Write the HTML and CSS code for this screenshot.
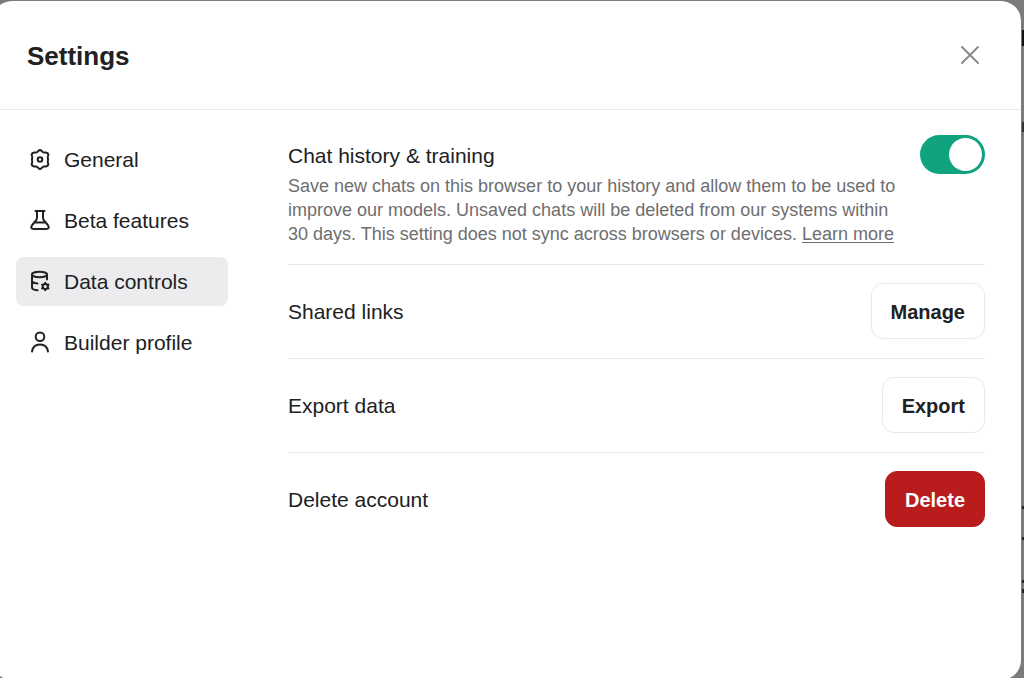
FILE: index.html
```
<!DOCTYPE html>
<html lang="en">
<head>
    <meta charset="UTF-8">
    <meta name="viewport" content="width=device-width, initial-scale=1.0">
    <title>Settings</title>
    <link rel="stylesheet" href="styles.css">
</head>
<body>
    <div class="modal" role="dialog" aria-labelledby="modal-title">
        <header class="modal-header">
            <h2 id="modal-title">Settings</h2>
            <button class="close-btn" aria-label="Close">
                <svg width="20" height="20" viewBox="0 0 20 20"><path d="M2 2L18 18M18 2L2 18"/></svg>
            </button>
        </header>

        <div class="modal-body">
            <nav class="tabs">
                <button class="tab">
                    <svg width="24" height="24" viewBox="0 0 24 24">
                        <path d="M10.4 2.8Q12 1.4 13.6 2.8L14.6 3.9Q15.2 4.5 16.2 4.5H17.8Q20.4 4.8 20.3 7.2L19.8 8.8Q19.5 9.6 19.9 10.4Q20.2 11.5 19.9 12.6Q19.5 13.4 19.8 14.2L20.3 15.8Q20.4 18.2 17.8 18.5H16.2Q15.2 18.5 14.6 19.1L13.6 20.2Q12 21.6 10.4 20.2L9.4 19.1Q8.8 18.5 7.8 18.5H6.2Q3.6 18.2 3.7 15.8L4.2 14.2Q4.5 13.4 4.1 12.6Q3.8 11.5 4.1 10.4Q4.5 9.6 4.2 8.8L3.7 7.2Q3.6 4.8 6.2 4.5H7.8Q8.8 4.5 9.4 3.9Z"/>
                        <circle cx="12" cy="11.5" r="2.3"/>
                    </svg>
                    <span>General</span>
                </button>
                <button class="tab">
                    <svg width="24" height="24" viewBox="0 0 24 24">
                        <path d="M7.5 2H16.5M9 2V8.5Q9 10 8 11.5L4.2 16Q2.6 18.2 3.7 19.2Q4.5 20 6.5 20H17.5Q19.5 20 20.3 19.2Q21.4 18.2 19.8 16L16 11.5Q15 10 15 8.5V2M6.5 13.5H17.5"/>
                    </svg>
                    <span>Beta features</span>
                </button>
                <button class="tab active">
                    <svg width="24" height="24" viewBox="0 0 24 24">
                        <ellipse cx="11.5" cy="4.5" rx="7.5" ry="2.7"/>
                        <path d="M4 4.5V17.5Q4 19.8 9.5 20.3M19 4.5V9.5M4 11Q4.5 13 9.5 13.4"/>
                        <circle cx="17.3" cy="16.5" r="2.6"/>
                        <path d="M17.3 12.8V13.5M17.3 19.5V20.2M14.1 14.6L14.6 15M20 18L20.5 18.4M14.1 18.4L14.6 18M20 15L20.5 14.6"/>
                    </svg>
                    <span>Data controls</span>
                </button>
                <button class="tab">
                    <svg width="24" height="24" viewBox="0 0 24 24">
                        <circle cx="12" cy="5.8" r="4.3"/>
                        <path d="M4 20.5C4.6 16.2 7.6 13.5 12 13.5S19.4 16.2 20 20.5"/>
                    </svg>
                    <span>Builder profile</span>
                </button>
            </nav>

            <main class="panel">
                <section class="setting">
                    <div class="setting-head">
                        <label for="history">Chat history &amp; training</label>
                        <input type="checkbox" role="switch" id="history" class="switch" checked>
                    </div>
                    <p class="description">Save new chats on this browser to your history and allow them to be used to improve our models. Unsaved chats will be deleted from our systems within 30 days. This setting does not sync across browsers or devices. <a href="#">Learn more</a></p>
                </section>
                <section class="setting row">
                    <span>Shared links</span>
                    <button class="btn">Manage</button>
                </section>
                <section class="setting row">
                    <span>Export data</span>
                    <button class="btn">Export</button>
                </section>
                <section class="setting row">
                    <span>Delete account</span>
                    <button class="btn btn-danger">Delete</button>
                </section>
            </main>
        </div>
    </div>
</body>
</html>
```
FILE: styles.css
```
* {
    box-sizing: border-box;
}

html {
    background-color: #7b7b7b;
}

body {
    height: 100vh;
    margin: 0;
    padding-right: 3px;
    overflow: hidden;
    font-family: "Liberation Sans", Arial, sans-serif;
    font-size: 21px;
    color: #202123;
    /* bits of the dimmed page that show past the modal */
    background-image:
        linear-gradient(#111, #111),
        linear-gradient(#333, #333),
        linear-gradient(#222, #222),
        linear-gradient(#222, #222),
        linear-gradient(#222, #222),
        linear-gradient(#222, #222);
    background-repeat: no-repeat;
    background-size: 2px 16px, 2px 10px, 2px 3px, 2px 3px, 2px 3px, 2px 4px;
    background-position: right 30px, right 122px, right 506px, right 537px, right 580px, right 589px;
}

button {
    font: inherit;
    color: inherit;
    border: none;
    cursor: pointer;
}

svg {
    display: block;
    fill: none;
    stroke: currentColor;
    stroke-width: 2;
    stroke-linecap: round;
    stroke-linejoin: round;
}

.modal {
    min-height: calc(100vh + 2px);
    margin-left: -8px;
    border-top: 1px solid #7b7b7b;
    background-color: white;
    background-clip: padding-box;
    border-radius: 20px;
}

.modal-header {
    display: flex;
    align-items: center;
    justify-content: space-between;
    height: 109px;
    padding: 0 41px 0 35px;
    border-bottom: 1px solid #e9e9ea;
}

.modal-header h2 {
    margin: 0;
    padding-top: 2px;
    font-size: 26px;
    font-weight: 600;
}

.close-btn {
    padding: 0;
    background: none;
    color: #8a8a8c;
}

.modal-body {
    display: flex;
    gap: 60px;
    padding: 25px 36px 25px 24px;
}

.tabs {
    display: flex;
    flex-direction: column;
    flex: 0 0 212px;
    gap: 12px;
}

.tab {
    display: flex;
    align-items: center;
    gap: 12px;
    height: 49px;
    padding: 0 12px;
    border-radius: 8px;
    background: none;
    text-align: left;
}

.tab.active {
    background-color: #ececee;
}

.panel {
    flex: 1;
}

.setting {
    padding: 18px 0 19px;
    border-bottom: 1px solid #e9e9ea;
}

.setting:first-child {
    padding: 0 0 18px;
}

.setting:last-child {
    border-bottom: none;
}

.setting-head,
.row {
    display: flex;
    align-items: center;
    justify-content: space-between;
}

.setting-head label,
.row span {
    padding-top: 2px;
}

.description {
    max-width: 616px;
    margin: 0;
    font-size: 18px;
    line-height: 24px;
    color: #6e6e70;
}

.description a {
    color: inherit;
    text-underline-offset: 2px;
}

.switch {
    appearance: none;
    display: flex;
    justify-content: flex-end;
    width: 65px;
    height: 39px;
    margin: 0;
    padding: 3px;
    border-radius: 20px;
    background-color: #10a37f;
    cursor: pointer;
}

.switch::before {
    content: "";
    width: 33px;
    height: 33px;
    border-radius: 50%;
    background-color: white;
}

.switch:not(:checked) {
    justify-content: flex-start;
    background-color: #d1d1d4;
}

.btn {
    height: 56px;
    padding: 2px 19px 0;
    border: 1px solid #e9e9ea;
    border-radius: 12px;
    background-color: white;
    font-size: 20px;
    font-weight: 600;
}

.btn-danger {
    border-color: #b91c1c;
    background-color: #b91c1c;
    color: white;
}
```
